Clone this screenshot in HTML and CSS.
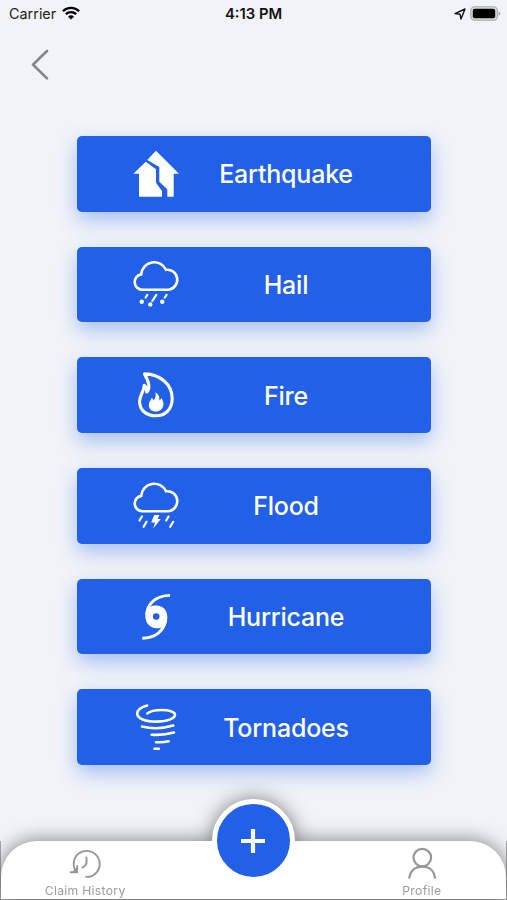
FILE: index.html
```html
<!DOCTYPE html>
<html lang="en">
<head>
  <meta charset="UTF-8">
  <meta name="viewport" content="width=device-width, initial-scale=1.0">
  <title>Claims</title>
  <link rel="stylesheet" href="styles.css">
</head>
<body>
  <div class="screen">

    <div class="status">
      <div class="carrier">
        <span>Carrier</span>
        <svg width="18" height="14" viewBox="0 0 18 14" fill="none" stroke="#000" stroke-width="2.3">
          <path d="M0.9 5.2A11.6 11.6 0 0 1 17.1 5.2"/>
          <path d="M3.8 8.2A7.5 7.5 0 0 1 14.2 8.2"/>
          <path d="M9 13.6L6 10.7A4.3 4.3 0 0 1 12 10.7Z" fill="#000" stroke="none"/>
        </svg>
      </div>
      <div class="time">4:13 PM</div>
      <div class="power">
        <svg width="12" height="12" viewBox="0 0 12 12" fill="none" stroke="#111" stroke-width="1.4" stroke-linejoin="round">
          <path d="M1 5.6L11 1L7 11L6 6.2Z"/>
        </svg>
        <svg width="31" height="15" viewBox="0 0 31 15">
          <rect x="0.8" y="0.8" width="26.6" height="13.4" rx="4" fill="#d9dadc" stroke="#a5a6a8" stroke-width="1.1"/>
          <rect x="2.8" y="2.8" width="22.4" height="9.4" rx="2" fill="#000"/>
          <path d="M28.6 5.2Q30.4 6 30.4 7.5T28.6 9.8Z" fill="#a5a6a8"/>
        </svg>
      </div>
    </div>

    <div class="topbar">
      <svg class="back" width="18" height="32" viewBox="0 0 18 32" fill="none" stroke="#858588" stroke-width="2.7" stroke-linecap="round" stroke-linejoin="round">
        <path d="M16 2L2 15.6L16 29.4"/>
      </svg>
    </div>

    <div class="list">

      <div class="card">
        <svg class="icon" viewBox="0 0 46 46" fill="#fff">
          <path d="M12.8 10.7L0.3 22.7H6V45.8H29V40L23 31.7V18.2Z"/>
          <path d="M23 -0.2L46 22.7H40.7V45.8H34.3V38.3L26.3 30.7V16L14.2 9Z"/>
        </svg>
        <div class="label">Earthquake</div>
      </div>

      <div class="card">
        <svg class="icon" viewBox="0 0 46 46" fill="none" stroke="#fff" stroke-width="2.6" stroke-linecap="round">
          <path d="M9 28.7A7.7 7.7 0 0 1 8.2 13.4A13 13 0 0 1 33 8.8A10 10 0 0 1 35.5 28.7Z"/>
          <path d="M14.3 33.8L12.6 36.5M23.3 33.8L19.4 39.8M33.6 33.8L31.8 36.5" stroke-width="2.2"/>
          <g fill="#fff" stroke="none">
            <circle cx="8.7" cy="40.7" r="2.2"/>
            <circle cx="17.3" cy="43.4" r="2.2"/>
            <circle cx="29.3" cy="40.7" r="2.2"/>
          </g>
        </svg>
        <div class="label">Hail</div>
      </div>

      <div class="card">
        <svg class="icon" viewBox="0 0 46 46" fill="none" stroke="#fff" stroke-width="3.1" stroke-linejoin="round">
          <path d="M11.5 1.9C27 2.4 39.2 12 39.2 26.5C39.2 37 32.5 43.8 22.8 43.8C13 43.8 6.6 37.8 6.6 29.5C6.6 22.5 11.2 20 11.2 13.2C13.2 14.7 13.8 17 13.7 20C18.5 15.5 15 8 11.5 1.9Z"/>
          <path d="M22.3 20.3C27 23.2 26.4 26 26.3 28.6C27.6 28 28 26.7 28.2 25.8C33.5 33.5 28.5 39.6 22.8 39.6C18.5 39.6 15.8 36.6 15.8 33C15.8 29.5 18 28.2 18.7 25.8C19.8 26.6 20.2 27.5 20.4 28.5C22.5 26.4 23.3 23.5 22.3 20.3Z" fill="#fff" stroke="none"/>
        </svg>
        <div class="label">Fire</div>
      </div>

      <div class="card">
        <svg class="icon" viewBox="0 0 46 46" fill="none" stroke="#fff" stroke-width="2.6" stroke-linecap="round">
          <path d="M9 28.2A7.7 7.7 0 0 1 8.2 12.9A13 13 0 0 1 33 8.3A10 10 0 0 1 35.5 28.2Z"/>
          <path d="M8.9 33.5L6.5 37.5M13.5 38.8L10.6 43.8M35.5 33.5L33.2 37.5M40.2 38.8L37.2 43.8" stroke-width="2.2"/>
          <path d="M21.2 32H26.4L24.6 36.1H27.8L20.2 45.4L22 39.4H18.2Z" fill="#fff" stroke="none"/>
        </svg>
        <div class="label">Flood</div>
      </div>

      <div class="card">
        <svg class="icon" viewBox="0 0 46 46">
          <path d="M37 1.4C24 1.6 15 8.5 13.6 20" fill="none" stroke="#fff" stroke-width="2.9"/>
          <path d="M9.3 44.2C22 44 31.5 37 32.8 25" fill="none" stroke="#fff" stroke-width="2.9"/>
          <path fill="#fff" fill-rule="evenodd" d="M12.3 20.5C13 14 17.5 11.5 23 11.5C30.5 11.5 34.3 16.5 34.3 23C34.3 25 34 27.2 33.3 29C31.5 32.8 28 34.2 24 34.2C16.5 34.2 12 29 12.3 20.5ZM23.2 19.3A3.3 3.3 0 1 0 23.2 25.9A3.3 3.3 0 1 0 23.2 19.3Z"/>
        </svg>
        <div class="label">Hurricane</div>
      </div>

      <div class="card">
        <svg class="icon" viewBox="0 0 46 46" fill="none" stroke="#fff" stroke-width="2.6" stroke-linecap="round">
          <path d="M14.2 1.5C7 3.5 4.2 6.5 4.2 9.6C4.2 14.5 12.5 17.6 23 17.6C34 17.6 42 14.6 42 10.8C42 7.8 36 6 28.7 6C22 6 16.8 7.3 14.3 9.5"/>
          <path d="M9 22.5Q24 26.3 40.3 21.5"/>
          <path d="M18.5 30.7Q30 31.6 41 28.5"/>
          <path d="M23 38.2Q30 38.6 35.7 37.2"/>
          <path d="M21.5 44.7H25.8"/>
        </svg>
        <div class="label">Tornadoes</div>
      </div>

    </div>

    <div class="footer">
      <div class="tabs">
        <div class="tab">
          <svg width="32" height="30" viewBox="0 0 32 30" fill="none" stroke="#969698" stroke-width="1.9" stroke-linecap="round" stroke-linejoin="round">
            <path d="M7.2 21.6A13 13 0 1 1 17 26.9"/>
            <path d="M1.6 22.2H8.2V16"/>
            <path d="M4.6 21.8L8 18.6"/>
            <path d="M17.5 7.4V12.8Q17.5 15.4 13.4 17.6"/>
          </svg>
          <span>Claim History</span>
        </div>
        <div class="tab">
          <div class="add">
            <svg width="24" height="24" viewBox="0 0 24 24" fill="none" stroke="#fff" stroke-width="4.2">
              <path d="M12 0V24M0 12H24"/>
            </svg>
          </div>
        </div>
        <div class="tab">
          <svg width="30" height="32" viewBox="0 0 30 32" fill="none" stroke="#969698" stroke-width="2.2">
            <circle cx="15.3" cy="9.6" r="8.8"/>
            <path d="M2.3 30.6C2.8 23 8 18.6 15.3 18.6S27.5 23 28 30.6"/>
          </svg>
          <span>Profile</span>
        </div>
      </div>
    </div>

  </div>
</body>
</html>
```
FILE: styles.css
```css
body{
  margin: 0;
  font-family: Inter, "Liberation Sans", sans-serif;
}

.screen{
  display: flex;
  flex-direction: column;
  width: 507px;
  height: 900px;
  background-color: #f1f3f8;
  overflow: hidden;
}

.status{
  display: grid;
  grid-template-columns: 1fr auto 1fr;
  align-items: center;
  height: 27px;
  padding: 0 6px 0 9px;
  font-size: 14.4px;
}

.carrier{
  display: flex;
  align-items: center;
  gap: 6px;
  color: #222;
}

.carrier svg{
  margin-top: -2px;
}

.time{
  font-weight: 600;
  color: #111;
  font-size: 14.8px;
  padding-right: 3px;
}

.power{
  display: flex;
  align-items: center;
  justify-content: flex-end;
  gap: 4px;
}

.topbar{
  display: flex;
  height: 60px;
  padding: 22px 31px 0;
  box-sizing: border-box;
}

.list{
  display: flex;
  flex-direction: column;
  align-items: center;
  gap: 35.2px;
  padding-top: 49px;
}

.card{
  display: flex;
  align-items: center;
  width: 354px;
  height: 75.5px;
  padding: 0 38px 0 56px;
  box-sizing: border-box;
  border-radius: 5px;
  background-color: #2260e7;
  box-shadow: 0 8px 20px rgba(34, 96, 231, 0.36);
}

.icon{
  width: 46px;
  height: 46px;
  overflow: visible;
}

.label{
  flex: 1;
  padding: 1px 0 0 1px;
  text-align: center;
  color: #fff;
  font-size: 25px;
  font-weight: 500;
  letter-spacing: -0.2px;
}

.footer{
  margin-top: auto;
  height: 59px;
  box-sizing: border-box;
  border: 1px solid #aaa;
  border-top: none;
}

.tabs{
  display: grid;
  grid-template-columns: 1fr 1fr 1fr;
  grid-template-rows: 58px;
  height: 58px;
  border-radius: 36px 36px 0 0;
  background-color: #fff;
  filter: drop-shadow(0 0 10px rgba(0, 0, 0, 0.5));
}

.tab{
  display: flex;
  flex-direction: column;
  align-items: center;
  justify-content: flex-end;
  gap: 4px;
  color: #9b9b9d;
  font-size: 12.2px;
  letter-spacing: 0.3px;
  line-height: 15px;
}

.tab span{
  margin: -1px 0 1px;
}

.tab svg{
  flex-shrink: 0;
  overflow: visible;
}

.add{
  display: flex;
  align-items: center;
  justify-content: center;
  flex-shrink: 0;
  width: 73px;
  height: 73px;
  margin-bottom: 17px;
  border: 5.5px solid #fff;
  border-radius: 50%;
  background-color: #2260e7;
}
```
